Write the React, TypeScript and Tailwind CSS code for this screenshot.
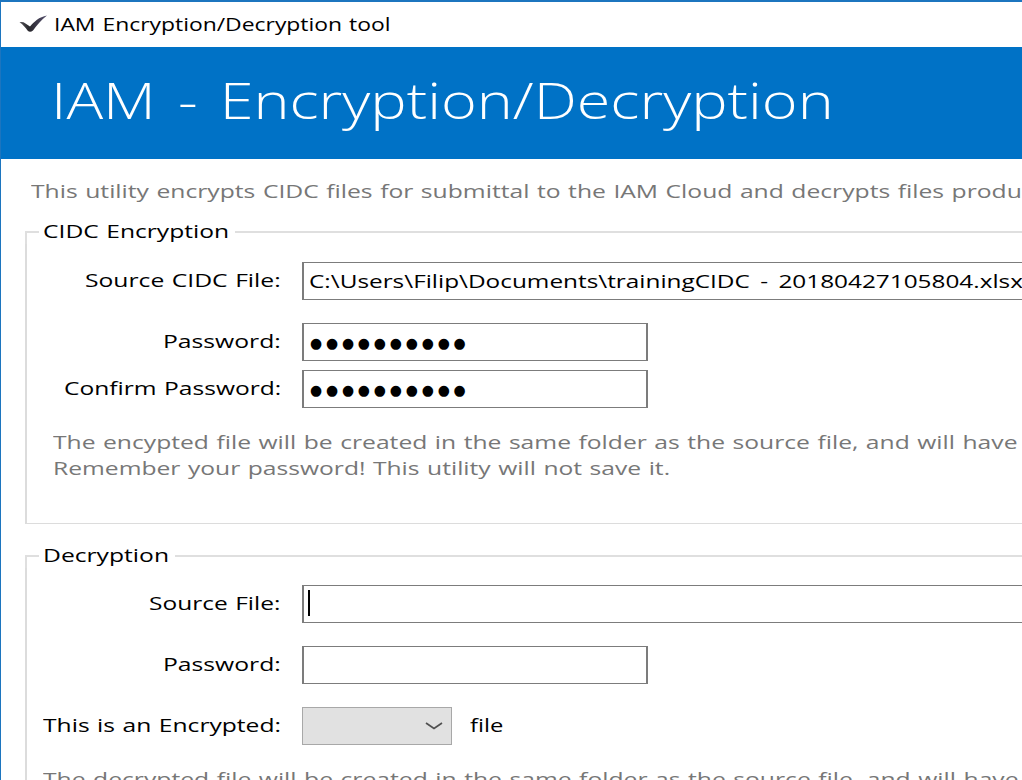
import { useLayoutEffect, useRef, useState } from "react";
import type { ReactNode } from "react";

/** Single line of text whose glyphs are stretched to fill a fixed width. */
function Line({ width, className = "", children }: { width: number; className?: string; children: ReactNode }) {
  const ref = useRef<HTMLSpanElement>(null);
  const [scale, setScale] = useState(1);
  useLayoutEffect(() => {
    if (ref.current) setScale(width / ref.current.offsetWidth);
  }, [width]);
  return (
    <span className={`block shrink-0 whitespace-nowrap ${className}`} style={{ width }}>
      <span ref={ref} className="inline-block origin-left" style={{ transform: `scaleX(${scale})` }}>
        {children}
      </span>
    </span>
  );
}

function Row({ label, width, className = "", children }: { label: string; width: number; className?: string; children: ReactNode }) {
  return (
    <div className={`flex h-[38px] shrink-0 items-center ${className}`}>
      <div className="mr-[21px] flex w-[254px] shrink-0 justify-end pb-[2px]">
        <Line width={width}>{label}</Line>
      </div>
      {children}
    </div>
  );
}

function Field({ wide = false, children }: { wide?: boolean; children?: ReactNode }) {
  return (
    <div className={`flex h-[38px] shrink-0 items-center border border-l-2 border-[#7c7c7c] bg-white pl-[5px] ${wide ? "w-[740px]" : "w-[346px] border-r-2"}`}>
      {children}
    </div>
  );
}

function MaskedValue() {
  return (
    <Line width={160} className="pl-px pt-px font-['DejaVu_Sans'] text-[14.5px] leading-[20px] tracking-[4px]">
      ●●●●●●●●●●
    </Line>
  );
}

function Group({ title, width, className = "", children }: { title: string; width: number; className?: string; children: ReactNode }) {
  return (
    <section className={`flex shrink-0 flex-col ${className}`}>
      <div className="flex h-6 shrink-0 items-center">
        <div className="mt-[11px] h-[13px] w-[14px] shrink-0 border-l-2 border-t-2 border-[#dfdfdf]" />
        <Line width={width} className="ml-1 mr-[6px] pb-[2px]">{title}</Line>
        <div className="h-0.5 grow bg-[#dfdfdf]" />
      </div>
      <div className="flex grow flex-col border-b border-l-2 border-[#dcdcdc]">{children}</div>
    </section>
  );
}

export default function App() {
  return (
    <div className="flex h-[780px] w-[1022px] flex-col overflow-hidden border-l border-t-2 border-[#1c75bf] bg-white font-['Open_Sans','Noto_Sans',sans-serif] text-[18px] leading-[26px] text-black [word-spacing:0.8px]">
      <header className="flex h-[45px] shrink-0 items-center pl-[18px]">
        <svg width="30" height="20" viewBox="0 0 30 20" className="mr-[5px] shrink-0">
          <defs>
            <linearGradient id="tick" x1="0" x2="1">
              <stop offset="0" stopColor="#55545a" />
              <stop offset="0.35" stopColor="#28272c" />
              <stop offset="1" stopColor="#55506e" />
            </linearGradient>
          </defs>
          <path d="M0.5 7.2 Q4 6.5 6.5 8.5 L11 11.5 C15 7 20 1.8 28 0.5 C22 5 18 10 14 15.5 Q11 18 8.5 15.5 C6.5 12.5 4 9.5 0.5 7.2Z" fill="url(#tick)" />
        </svg>
        <Line width={337} className="pb-px">IAM Encryption/Decryption tool</Line>
      </header>
      <div className="flex h-[112px] shrink-0 items-center bg-[#0072c6] pb-[6px] pl-[50px] text-[49px] font-light leading-[64px] text-white [word-spacing:5px]">
        <Line width={783}>IAM - Encryption/Decryption</Line>
      </div>
      <main className="flex grow flex-col">
        <p className="mt-[19px] flex h-[26px] shrink-0 pl-[30px] text-[#777777]">
          <Line width={991}>This utility encrypts CIDC files for submittal to the IAM Cloud and decrypts files produ</Line>
        </p>
        <Group title="CIDC Encryption" width={186} className="ml-6 mt-4 h-[304px]">
          <Row label="Source CIDC File:" width={196} className="mt-[18px]">
            <Field wide>
              <Line width={714} className="[word-spacing:3px]">C:\Users\Filip\Documents\trainingCIDC - 20180427105804.xlsx</Line>
            </Field>
          </Row>
          <Row label="Password:" width={118} className="mt-[23px]">
            <Field><MaskedValue /></Field>
          </Row>
          <Row label="Confirm Password:" width={217} className="mt-[9px]">
            <Field><MaskedValue /></Field>
          </Row>
          <div className="mt-[21px] pl-[26px] text-[#777777]">
            <Line width={964}>The encypted file will be created in the same folder as the source file, and will have</Line>
            <Line width={617}>Remember your password! This utility will not save it.</Line>
          </div>
        </Group>
        <Group title="Decryption" width={126} className="ml-6 mt-5 h-[305px]">
          <Row label="Source File:" width={132} className="mt-[17px]">
            <Field wide><span className="-ml-px mb-[3px] h-[26px] w-0.5 bg-black" /></Field>
          </Row>
          <Row label="Password:" width={118} className="mt-[23px]"><Field /></Row>
          <Row label="This is an Encrypted:" width={238} className="mt-[23px]">
            <div className="mr-[18px] flex h-[38px] w-[150px] shrink-0 items-center justify-end border border-[#a8a8a8] bg-[#e1e1e1] pr-2">
              <svg width="18" height="10" viewBox="0 0 18 10" fill="none">
                <path d="M1 2 L9 7.5 L17 2" stroke="#505050" strokeWidth="1.7" />
              </svg>
            </div>
            <Line width={33} className="pb-[2px]">file</Line>
          </Row>
          <div className="mt-[21px] pl-[16px] text-[#777777]">
            <Line width={976}>The decrypted file will be created in the same folder as the source file, and will have</Line>
          </div>
        </Group>
      </main>
    </div>
  );
}
